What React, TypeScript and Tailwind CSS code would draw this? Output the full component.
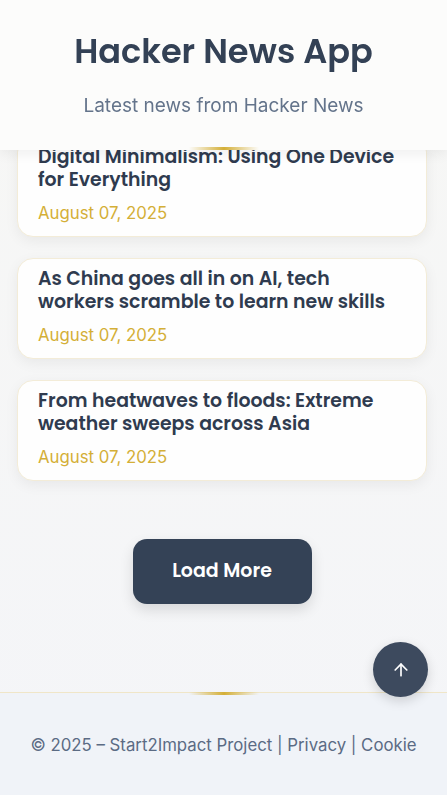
import React from "react";
import { ArrowUp } from "lucide-react";

type Story = {
  id: number;
  title: string;
  date: string;
};

const stories: Story[] = [
  { id: 1, title: "Digital Minimalism: Using One Device for Everything", date: "August 07, 2025" },
  { id: 2, title: "As China goes all in on AI, tech workers scramble to learn new skills", date: "August 07, 2025" },
  { id: 3, title: "From heatwaves to floods: Extreme weather sweeps across Asia", date: "August 07, 2025" },
];

const heading = { fontFamily: "Poppins, Inter, 'Noto Sans', sans-serif" };
const body = { fontFamily: "Inter, 'Noto Sans', sans-serif" };

function StoryCard({ story }: { story: Story }) {
  return (
    <article className="bg-[#fefefe] border border-[#f3ecd8] rounded-[16px] px-5 pt-[8px] pb-[11px] shadow-[0_4px_14px_rgba(0,0,0,0.06)]">
      <h2 className="text-[18.9px] leading-[23px] font-semibold text-[#2f3b4f]" style={heading}>
        {story.title}
      </h2>
      <p className="mt-[10px] text-[16.8px] leading-[24px] text-[#d4af37]" style={body}>
        {story.date}
      </p>
    </article>
  );
}

export default function App() {
  return (
    <div className="min-h-screen bg-gradient-to-b from-[#f7f7f5] to-[#f4f5f8]" style={body}>
      {/* Fixed header overlays the list */}
      <header className="fixed top-0 left-0 right-0 z-10 h-[150px] bg-[#fcfcfb] shadow-[0_4px_12px_rgba(0,0,0,0.06)] flex flex-col items-center">
        <h1 className="mt-[30px] text-[33.6px] leading-[44px] font-semibold text-[#334155]" style={heading}>
          Hacker News App
        </h1>
        <p className="mt-[18px] text-[19px] leading-[28px] text-[#64748b]">Latest news from Hacker News</p>
        <div className="absolute bottom-0 left-1/2 -translate-x-1/2 w-[70px] h-[3px] bg-gradient-to-r from-transparent via-[#d4af37] to-transparent" />
      </header>

      <main className="pt-[136px] pl-[17px] pr-[20px] flex flex-col gap-[21px]">
        {stories.map((s) => (
          <StoryCard key={s.id} story={s} />
        ))}
        <div className="flex justify-center mt-[37px] mb-[88px]">
          <button
            className="w-[179px] h-[65px] rounded-[14px] bg-[#344256] text-white text-[19px] font-semibold shadow-[0_6px_14px_rgba(0,0,0,0.12)]"
            style={heading}
          >
            Load More
          </button>
        </div>
      </main>

      <footer className="relative bg-[#f0f3f8] border-t border-[#f0e6c8] pt-[40px] pb-[40px] text-center">
        <div className="absolute -top-px left-1/2 -translate-x-1/2 w-[70px] h-[3px] bg-gradient-to-r from-transparent via-[#d4af37] to-transparent" />
        <p className="text-[16.8px] leading-[24px] text-[#5b6b84]">
          © 2025 – Start2Impact Project | Privacy | Cookie
        </p>
      </footer>

      <button
        aria-label="Back to top"
        className="fixed right-[19px] bottom-[98px] z-20 w-[55px] h-[55px] rounded-full bg-[#3d4a5e] text-white flex items-center justify-center shadow-[0_4px_12px_rgba(0,0,0,0.15)]"
      >
        <ArrowUp className="w-5 h-5" strokeWidth={2} />
      </button>
    </div>
  );
}
